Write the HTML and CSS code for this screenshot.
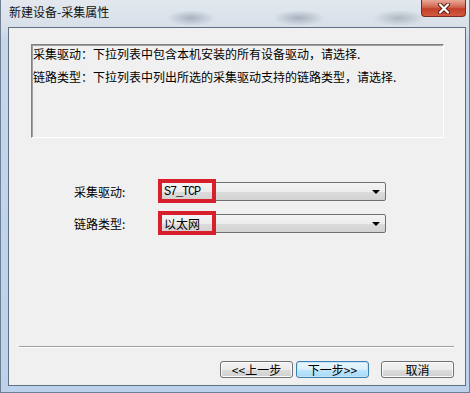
FILE: index.html
```html
<!DOCTYPE html>
<html lang="zh-CN">
<head>
    <meta charset="UTF-8">
    <title>新建设备-采集属性</title>
    <link rel="stylesheet" href="styles.css">
</head>
<body>

    <div class="window">
        <div class="titlebar">
            <span class="title">新建设备-采集属性</span>
            <div class="close-btn">
                <svg width="16" height="11" viewBox="0 0 16 11">
                    <path d="M4 1.5 L12 9.5 M12 1.5 L4 9.5" stroke="#5a1a10" stroke-width="4" stroke-linecap="round"/>
                    <path d="M4 1.5 L12 9.5 M12 1.5 L4 9.5" stroke="#ffffff" stroke-width="2.2" stroke-linecap="round"/>
                </svg>
            </div>
        </div>

        <div class="client">
            <div class="groupbox">
                <p>采集驱动：下拉列表中包含本机安装的所有设备驱动，请选择.</p>
                <p>链路类型：下拉列表中列出所选的采集驱动支持的链路类型，请选择.</p>
            </div>

            <div class="form">
                <div class="row">
                    <label>采集驱动:</label>
                    <div class="combo">
                        <span class="combo-value mono">S7_TCP</span>
                        <span class="arrow"></span>
                        <span class="mark"></span>
                    </div>
                </div>
                <div class="row">
                    <label>链路类型:</label>
                    <div class="combo">
                        <span class="combo-value">以太网</span>
                        <span class="arrow"></span>
                        <span class="mark"></span>
                    </div>
                </div>
            </div>

            <div class="separator"></div>

            <div class="buttons">
                <button class="btn">&lt;&lt;上一步</button>
                <button class="btn btn-default">下一步&gt;&gt;</button>
                <button class="btn btn-cancel">取消</button>
            </div>
        </div>
    </div>

</body>
</html>
```

FILE: styles.css
```css
body {
    margin: 0;
    padding: 0;
    width: 470px;
    height: 393px;
    overflow: hidden;
    font-family: "Noto Sans CJK SC", "Liberation Sans", sans-serif;
    font-size: 12px;
    color: #000;
}

.window {
    width: 470px;
    height: 393px;
    box-sizing: border-box;
    padding: 0 3px 6px 7px;
    display: flex;
    flex-direction: column;
    background:
        radial-gradient(ellipse 24px 8px at 190px 18px, rgba(90, 105, 125, 0.4), transparent),
        radial-gradient(ellipse 26px 8px at 298px 18px, rgba(90, 105, 125, 0.4), transparent),
        radial-gradient(ellipse 26px 8px at 398px 18px, rgba(90, 105, 125, 0.35), transparent),
        linear-gradient(#e3e8ee, #d6dee8 30px, #c5d6e9 40px, #bcd2ea);
    border: 1px solid #6f7f94;
    border-top: none;
}

.titlebar {
    height: 27px;
    display: flex;
    justify-content: space-between;
    align-items: flex-start;
    flex-shrink: 0;
}

.title {
    padding: 4px 0 0 1px;
    font-size: 12px;
    line-height: 16px;
    color: #111;
}

.close-btn {
    width: 45px;
    height: 17px;
    box-sizing: border-box;
    border: 1px solid #7b2b1f;
    border-top: none;
    border-radius: 0 0 4px 4px;
    background: linear-gradient(#e8a898, #d0654f 45%, #c2402a 55%, #d4583f);
    display: flex;
    align-items: center;
    justify-content: center;
}

.client {
    flex: 1;
    background: #f0f0f0;
    border: 1px solid #5f6f84;
    display: flex;
    flex-direction: column;
}

.groupbox {
    margin: 16px 21px 0 22px;
    height: 94px;
    box-sizing: border-box;
    border: 1px solid;
    border-color: #808080 #ffffff #ffffff #808080;
    box-shadow: inset 1px 1px 0 #a0a0a0;
    padding: 1px 0 0 1px;
}

.groupbox p {
    margin: 0 0 7px;
    line-height: 16px;
    white-space: nowrap;
}

.form {
    margin: 44px 0 0 65px;
    display: flex;
    flex-direction: column;
    gap: 13px;
}

.row {
    display: flex;
    align-items: center;
}

.row label {
    width: 85px;
}

.combo {
    position: relative;
    width: 227px;
    height: 19px;
    box-sizing: border-box;
    border: 1px solid #707070;
    border-radius: 2px;
    background: linear-gradient(#f4f4f4, #ececec 50%, #dcdcdc 51%, #d2d2d2);
    display: flex;
    align-items: center;
    justify-content: space-between;
    padding: 0 5px 0 4px;
}

.combo-value {
    line-height: 16px;
}

.mono {
    font-family: "Liberation Mono", monospace;
    font-size: 12px;
    letter-spacing: -1.2px;
}

.arrow {
    width: 0;
    height: 0;
    border-left: 4px solid transparent;
    border-right: 4px solid transparent;
    border-top: 4px solid #000;
}

.mark {
    position: absolute;
    left: -2px;
    top: -4px;
    width: 58px;
    height: 24px;
    box-sizing: border-box;
    border: 4px solid #d8202c;
}

.separator {
    margin: 113px 11px 0 10px;
    border-top: 1px solid #a0a0a0;
    border-bottom: 1px solid #ffffff;
}

.buttons {
    margin-top: 13px;
    padding-right: 11px;
    display: flex;
    justify-content: flex-end;
    gap: 3px;
}

.btn {
    width: 73px;
    height: 17px;
    padding: 0;
    font-family: "Noto Sans CJK SC", "Liberation Sans", sans-serif;
    font-size: 12px;
    line-height: 14px;
    color: #000;
    border: 1px solid #707070;
    border-radius: 3px;
    background: linear-gradient(#f2f2f2, #ebebeb 50%, #dddddd 51%, #cfcfcf);
    box-shadow: inset 0 0 0 1px #fbfbfb;
}

.btn-default {
    border-color: #3c7fb1;
    background: linear-gradient(#eaf6fd, #d9f0fc 50%, #bee6fd 51%, #a7d9f5);
    box-shadow: inset 0 0 0 1px #c4e5f6;
}

.btn-cancel {
    margin-left: 9px;
}
```
